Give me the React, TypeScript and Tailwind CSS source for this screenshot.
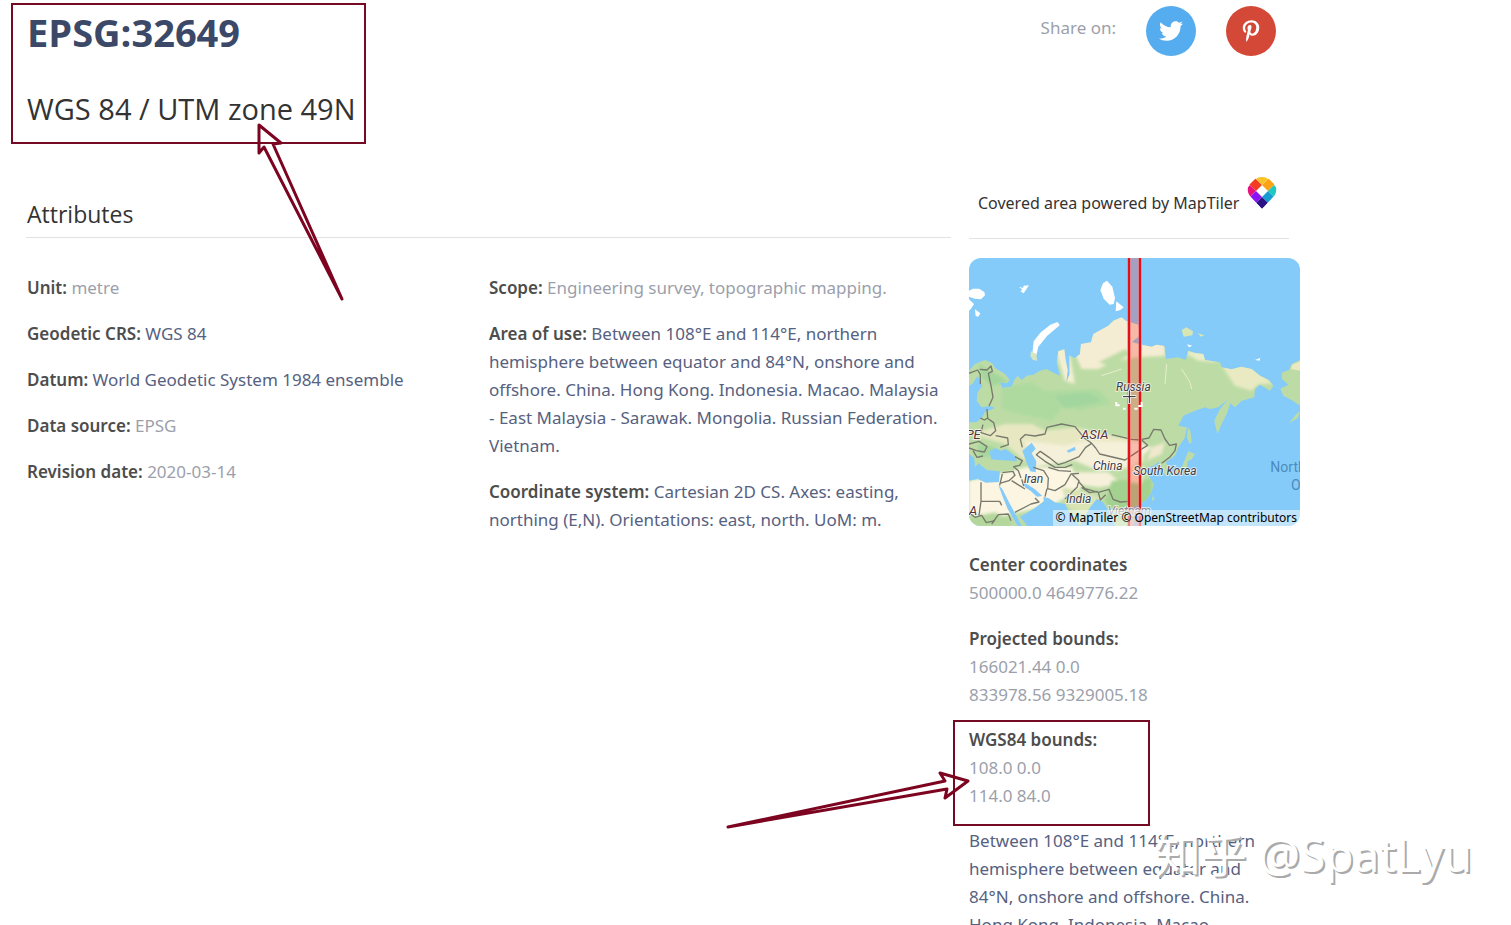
import { FaPinterestP, FaTwitter } from "react-icons/fa";

const attributes = [
  { label: "Unit:", value: "metre" },
  { label: "Geodetic CRS:", value: "WGS 84", href: "#wgs84" },
  {
    label: "Datum:",
    value: "World Geodetic System 1984 ensemble",
    href: "#datum",
  },
  { label: "Data source:", value: "EPSG" },
  { label: "Revision date:", value: "2020-03-14" },
];

const details = [
  { label: "Scope:", value: "Engineering survey, topographic mapping." },
  {
    label: "Area of use:",
    value:
      "Between 108°E and 114°E, northern hemisphere between equator and 84°N, onshore and offshore. China. Hong Kong. Indonesia. Macao. Malaysia - East Malaysia - Sarawak. Mongolia. Russian Federation. Vietnam.",
    href: "#area",
  },
  {
    label: "Coordinate system:",
    value:
      "Cartesian 2D CS. Axes: easting, northing (E,N). Orientations: east, north. UoM: m.",
    href: "#cs",
  },
];

const Attribute: React.FC<{ label: string; value: string; href?: string }> = ({
  label,
  value,
  href,
}) => (
  <p>
    <strong className="font-semibold text-[#4d4d4d]">{label}</strong>{" "}
    {href ? (
      <a href={href} className="text-[#56617f]">
        {value}
      </a>
    ) : (
      value
    )}
  </p>
);

const MapTilerLogo = () => (
  <svg viewBox="0 0 30 32" className="h-8 w-[30px] shrink-0" aria-hidden="true">
    <clipPath id="pin">
      <path d="M15 0 C19 0 21 1 24 4 L27 7 C30 10 30 15 27 19 L15 32 L3 19 C0 15 0 10 3 7 L6 4 C9 1 11 0 15 0Z" />
    </clipPath>
    <g clipPath="url(#pin)">
      <path d="M15 8 L26 -3 L32 3 L21 14Z" fill="#fca215" />
      <path d="M15 8 L4 -3 L-2 3 L9 14Z" fill="#f43c20" />
      <path d="M15 -4 L21 2 L15 8 L9 2Z" fill="#f9c32a" />
      <path d="M9 14 L3 8 L-3 14 L3 20Z" fill="#e8127a" />
      <path d="M21 14 L27 8 L33 14 L27 20Z" fill="#1fc9bf" />
      <path d="M15 20 L21 14 L27 20 L21 26Z" fill="#159dd3" />
      <path d="M15 20 L9 14 L3 20 L9 26Z" fill="#8a12f5" />
      <path d="M15 20 L21 26 L15 32 L9 26Z" fill="#2c1385" />
    </g>
  </svg>
);

const CoverageMap = () => (
  <svg
    viewBox="12 12 993 804"
    className="block w-full"
    role="img"
    aria-label="Covered area"
  >
    <defs>
      <filter id="soft" x="-10%" y="-10%" width="120%" height="120%">
        <feGaussianBlur stdDeviation="5" />
      </filter>
      <clipPath id="land">
        <path d="M12 350 L30 330 L60 318 L82 328 L90 342 L120 360 L134 378 L125 388 L104 385 L112 402 L140 398 L148 378 L158 365 L170 378 L185 365 L205 362 L225 350 L245 345 L262 355 L285 365 L275 325 L280 292 L298 286 L302 318 L308 348 L304 385 L314 360 L313 305 L330 312 L345 300 L348 270 L378 265 L385 240 L430 215 L445 200 L470 190 L482 200 L520 212 L524 245 L500 264 L530 272 L560 278 L575 272 L598 276 L603 315 L640 310 L662 318 L670 290 L688 296 L715 300 L720 318 L765 325 L770 340 L800 346 L828 338 L860 345 L885 365 L912 378 L925 395 L915 410 L885 392 L870 405 L868 430 L830 440 L810 460 L796 448 L785 480 L770 510 L757 540 L748 500 L765 465 L790 436 L760 460 L735 465 L720 460 L690 470 L655 485 L640 515 L665 520 L660 550 L640 580 L630 605 L602 625 L615 645 L614 662 L600 664 L590 640 L580 625 L565 635 L545 640 L550 665 L566 690 L560 715 L540 740 L515 755 L490 765 L510 790 L505 816 L450 816 L430 770 L415 745 L395 735 L375 760 L360 785 L345 816 L320 790 L300 750 L270 745 L252 733 L235 728 L236 742 L205 765 L165 788 L178 804 L186 816 L12 816Z" />
      </clipPath>
    </defs>
    <rect x="12" y="12" width="993" height="804" fill="#85cbf9" />
    <g clipPath="url(#land)">
      <rect x="12" y="180" width="993" height="640" fill="#bddca5" />
      <g filter="url(#soft)">
        <path d="M270 285 L310 280 L330 390 L300 380Z" fill="#f4efd4" />
        <path d="M340 260 L470 180 L530 210 L600 270 L600 305 L520 310 L450 320 L400 345 L350 345 L330 300Z" fill="#f5edd3" />
        <path d="M400 325 L480 285 L500 300 L430 335Z" fill="#bddca5" />
        <path d="M650 290 L720 295 L760 325 L700 320Z" fill="#e9edc9" />
        <path d="M770 335 L860 335 L925 390 L880 390 L860 410 L810 395Z" fill="#e9eac2" />
        <path d="M110 400 L200 385 L240 410 L400 405 L440 450 L340 470 L300 450 L260 500 L160 480 L110 465Z" fill="#aedaa0" />
        <path d="M270 425 L370 415 L410 440 L300 465Z" fill="#a3d59f" />
        <path d="M40 330 L110 370 L130 385 L80 395 L50 370Z" fill="#a4d69c" />
        <path d="M20 540 L120 510 L200 510 L240 530 L330 520 L440 545 L520 560 L540 620 L460 650 L300 610 L180 620 L120 570Z" fill="#e7e8c2" />
        <path d="M180 560 L300 575 L370 560 L520 565 L560 580 L500 640 L400 650 L330 620 L200 640Z" fill="#f5f0d9" />
        <path d="M12 680 L100 660 L180 640 L320 640 L350 700 L270 750 L100 790 L12 780Z" fill="#fbf5e2" />
        <path d="M310 655 L430 655 L470 690 L400 700 L330 690Z" fill="#f7f1dc" />
        <path d="M290 700 L350 710 L410 730 L370 790 L310 760Z" fill="#d9e3b4" />
        <path d="M560 580 L600 565 L590 600 L545 620Z" fill="#f0e8cd" />
        <path d="M12 790 L90 775 L140 800 L140 816 L12 816Z" fill="#b3d79b" />
        <path d="M440 680 L560 675 L560 740 L460 800 L420 740Z" fill="#a3d18f" />
        <path d="M40 570 L90 580 L90 605 L40 610Z" fill="#a4d69c" />
        <path d="M500 630 L540 640 L530 690 L495 685Z" fill="#eee9c7" />
      </g>
      <g fill="none" stroke="#e8eccb" strokeWidth="3">
        <path d="M605 330 L600 390 M650 345 L675 385 L680 405 M410 365 L470 345" />
      </g>
    </g>

    <g fill="#85cbf9">
      <path d="M12 395 L22 390 L38 365 L52 395 L38 415 L35 440 L50 460 L75 456 L90 462 L60 474 L50 492 L34 505 L12 505Z" />
      <path d="M74 592 L92 582 L108 590 L122 585 L150 606 L156 622 L118 620 L78 616Z" />
      <path d="M172 590 L200 566 L212 584 L200 598 L214 622 L212 655 L196 652 L184 625Z" />
      <path d="M12 600 L28 612 L30 640 L40 628 L62 645 L105 650 L102 684 L62 686 L38 675 L12 680Z" />
      <path d="M100 692 L112 705 L132 745 L154 785 L170 816 L158 816 L128 765 L112 725Z" />
      <path d="M170 674 L182 688 L210 706 L232 726 L216 728 L198 712 L180 700Z" />
      <path d="M305 590 L330 578 L332 588 L310 596Z" />
    </g>

    <g fill="#fff">
      <path d="M12 110 L24 104 L42 104 L58 114 L60 124 L48 136 L30 134 L12 128Z" />
      <path d="M12 136 L27 150 L18 164 L12 170Z M30 166 L46 178 L40 188 L32 186Z" />
      <path d="M162 98 L174 102 L176 95 L192 94 L184 106 L176 118 L166 112 L172 107Z" />
      <path d="M426 80 L442 98 L450 132 L446 150 L434 152 L416 134 L406 108 L414 88Z" />
      <path d="M454 142 L476 160 L466 168 L452 172Z" />
      <path d="M278 204 L284 214 L246 246 L220 278 L214 304 L202 300 L206 262 L226 236 L256 212Z" />
      <path d="M666 271 L682 275 L672 280Z M870 318 L886 312 L884 320Z" />
    </g>
    <path d="M198 292 L214 300 L216 320 L204 318 L196 306Z" fill="#d9e6bd" />
    <path d="M650 228 L664 220 L684 232 L682 244 L656 248Z M698 238 L718 244 L708 248Z" fill="#d8e6b5" />
    <g fill="#bddca5">
      <path d="M1005 318 L980 330 L972 348 L950 356 L950 374 L970 392 L946 404 L955 425 L980 438 L1000 452 L1005 450Z" />
      <path d="M1005 472 L998 492 L972 508 L994 480Z" />
      <path d="M668 520 L676 530 L680 565 L674 570 L666 550Z" />
      <path d="M670 592 L690 600 L680 616 L668 622 L666 642 L640 655 L616 668 L618 658 L650 640Z" />
      <path d="M564 722 L568 736 L560 742Z" />
      <path d="M40 622 L70 618 L140 620 L156 634 L146 648 L104 652 L66 648Z" />
    </g>
    <path d="M1005 322 L982 332 L978 345 L1005 350Z" fill="#e9eac2" />

    <g fill="none" stroke="#77796c" strokeWidth="4" strokeLinejoin="round">
      <path d="M12 358 L38 348 L46 362 L46 390 M44 346 L66 348 L78 336 L82 352 L70 358 L78 395 L84 430 L72 456" />
      <path d="M66 465 L68 492 L58 498 L46 492 M66 492 L86 506 L92 530 L76 545 L48 536 L54 512 M92 545 L128 552 L130 572 L106 580 M12 570 L42 562 L66 578 L58 594 L34 590 L12 582 M24 590 L36 610 L54 606" />
      <path d="M172 580 L166 556 L180 542 L210 546 L240 540 L246 520 L290 510 L330 518 L358 552 L380 568 L392 582 L404 600 L480 618 L522 590 L548 574 L530 558 L500 556 L440 542" />
      <path d="M380 568 L362 580 L342 608 L300 626 L280 632 L252 610 L226 592 L214 602 L240 622 L270 640 L300 640 L322 632" />
      <path d="M530 556 L552 552 L566 526 L588 528 L600 555 L614 574 L634 570 L630 590 L614 610 L590 628" />
      <path d="M205 640 L236 650 L250 672 L248 704 L270 710 L300 692 L318 660 L342 658 M250 640 L282 650 L318 652 M320 660 L342 680 L336 700 L300 735 M246 704 L240 728" />
      <path d="M342 684 L360 704 L400 715 L432 706 L444 736 L466 744 L490 742 M400 715 L406 738 L422 722 M350 700 L374 716 L398 712" />
      <path d="M150 608 L172 620 L164 634 L146 638 L160 650 L168 672 M112 656 L144 652 L150 664 L132 680 L104 688 M112 660 L104 694 M140 680 L180 705 M170 676 L176 696" />
      <path d="M48 685 L48 742 L104 742 M48 742 L42 784 M104 742 L110 754 M80 810 L100 782 L130 780 L138 800 M150 775 L198 750 L222 744 L210 732" />
      <path d="M12 776 L30 790 L50 784 L64 806 L90 800" />
    </g>

    {/* zone extent */}
    <rect x="492" y="12" width="33" height="804" fill="#ff2020" fillOpacity="0.25" />
    <path d="M492 12 V816 M525 12 V816" stroke="#ff9aa0" strokeWidth="12" opacity="0.5" />
    <path d="M492 12 V816 M525 12 V816" stroke="#e01217" strokeWidth="7" />

    <g
      fontFamily="Roboto, sans-serif"
      fontStyle="italic"
      fontSize="36"
      fill="#3c3c48"
      stroke="#fff"
      strokeWidth="5"
      strokeOpacity="0.75"
      paintOrder="stroke"
    >
      <text x="453" y="411">Russia</text>
      <text x="384" y="647">China</text>
      <text x="505" y="662">South Korea</text>
      <text x="176" y="686">Iran</text>
      <text x="303" y="748">India</text>
      <text x="428" y="782" fill="#8d8791">Vietnam</text>
      <g fill="#57323c" fontSize="39">
        <text x="348" y="555">ASIA</text>
        <text x="2" y="555">PE</text>
        <text x="12" y="782">A</text>
      </g>
    </g>
    <g fontFamily="Roboto, sans-serif" fontSize="42" fill="#4b8cbc">
      <text x="916" y="654">North</text>
      <text x="978" y="708">O</text>
    </g>

    <g fill="none">
      <path d="M472 428 H514 M493 407 V449" stroke="#fff" strokeWidth="8" />
      <path d="M474 428 H512 M493 409 V447" stroke="#222" strokeWidth="3" />
      <path d="M454 444 V454 H464 M474 464 H482 M508 464 H518 M520 456 H530 V444" stroke="#fff" strokeWidth="6" />
    </g>
  </svg>
);

export default function App() {
  return (
    <div className="relative h-screen overflow-hidden bg-white font-['Noto_Sans',sans-serif] text-[17px] leading-7 text-[#9c9fab]">
      <div className="max-w-[1300px]">
        <header className="flex items-start justify-between pr-6">
          <div className="relative mt-[3px] ml-[11px] h-[141px] w-[355px] border-2 border-[#740a24] pl-[14px] whitespace-nowrap">
            <h1 className="pt-[2px] font-['Open_Sans',sans-serif] text-[38px] leading-[50px] font-bold text-[#3b4868]">
              EPSG:32649
            </h1>
            <h2 className="mt-8 font-['Open_Sans',sans-serif] text-[29px] leading-10 text-[#333]">
              WGS 84 / UTM zone 49N
            </h2>
            <svg
              viewBox="250 118 100 190"
              className="absolute top-[113px] left-[237px] z-10 h-[190px] w-[100px]"
              aria-hidden="true"
            >
              <path
                d="M259 125 L281 143 L273 144 L342 299 L264 147 L259 153Z"
                fill="none"
                stroke="#7d0420"
                strokeWidth="3"
                strokeLinejoin="round"
              />
            </svg>
          </div>
          <div className="flex pt-[6px]">
            <span className="pt-2">Share on:</span>
            <a
              href="#twitter"
              aria-label="Share on Twitter"
              className="ml-[30px] flex size-[50px] items-center justify-center rounded-full bg-[#55acee] text-white"
            >
              <FaTwitter size={24} />
            </a>
            <a
              href="#pinterest"
              aria-label="Share on Pinterest"
              className="ml-[30px] flex size-[50px] items-center justify-center rounded-full bg-[#d34836] text-white"
            >
              <FaPinterestP size={22} />
            </a>
          </div>
        </header>

        <div className="flex items-start gap-[18px] pl-[26px]">
          <main className="flex-1">
            <h3 className="mt-[53px] border-b border-[#e2e2e2] pb-[6px] pl-px font-['Open_Sans',sans-serif] text-[23px] leading-[34px] text-[#333]">
              Attributes
            </h3>
            <div className="grid grid-cols-2 pt-9 pl-px">
              <div className="flex flex-col gap-[18px] pr-4">
                {attributes.map((item) => (
                  <Attribute key={item.label} {...item} />
                ))}
              </div>
              <div className="flex flex-col gap-[18px] pr-2">
                {details.map((item) => (
                  <Attribute key={item.label} {...item} />
                ))}
              </div>
            </div>
          </main>

          <aside className="w-[331px] shrink-0">
            <div className="mr-[11px] flex items-start border-b border-[#e2e2e2] pt-[33px] pb-[21px] pl-[9px] text-base text-[#333]">
              <span className="pt-3 pr-2 leading-7 whitespace-nowrap">
                Covered area powered by MapTiler
              </span>
              <MapTilerLogo />
            </div>
            <div className="relative mt-[19px] overflow-hidden rounded-xl">
              <CoverageMap />
              <p className="absolute right-0 bottom-0 bg-white/50 px-[3px] text-[12px] leading-4 whitespace-nowrap text-black">
                <a href="#maptiler">© MapTiler</a>{" "}
                <a href="#osm">© OpenStreetMap contributors</a>
              </p>
            </div>
            <div className="mt-[25px]">
              <h4 className="font-semibold text-[#4d4d4d]">Center coordinates</h4>
              <p>500000.0 4649776.22</p>
            </div>
            <div className="mt-[18px]">
              <h4 className="font-semibold text-[#4d4d4d]">Projected bounds:</h4>
              <p>166021.44 0.0</p>
              <p>833978.56 9329005.18</p>
            </div>
            <div className="relative mt-[11px] -ml-4 h-[106px] w-[197px] border-2 border-[#740a24] pt-1 pl-[14px]">
              <h4 className="font-semibold text-[#4d4d4d]">WGS84 bounds:</h4>
              <p>108.0 0.0</p>
              <p>114.0 84.0</p>
              <svg
                viewBox="720 765 260 70"
                className="absolute top-[43px] right-[168px] h-[70px] w-[260px]"
                aria-hidden="true"
              >
                <path
                  d="M968 781 L940 773 L945 781 L728 827 L947 789 L945 798Z"
                  fill="none"
                  stroke="#7d0420"
                  strokeWidth="3"
                  strokeLinejoin="round"
                />
              </svg>
            </div>
            <p className="mt-px pr-6 text-[#56617f]">
              Between 108°E and 114°E, northern hemisphere between equator and
              84°N, onshore and offshore. China. Hong Kong. Indonesia. Macao.
            </p>
          </aside>
        </div>
      </div>

      <div className="absolute right-[39px] bottom-[41px] font-['Noto_Sans','Noto_Sans_CJK_SC',sans-serif] text-[46px] leading-[60px] whitespace-nowrap text-white [text-shadow:2px_2px_0_#aaa]">
        知乎 @SpatLyu
      </div>
    </div>
  );
}
